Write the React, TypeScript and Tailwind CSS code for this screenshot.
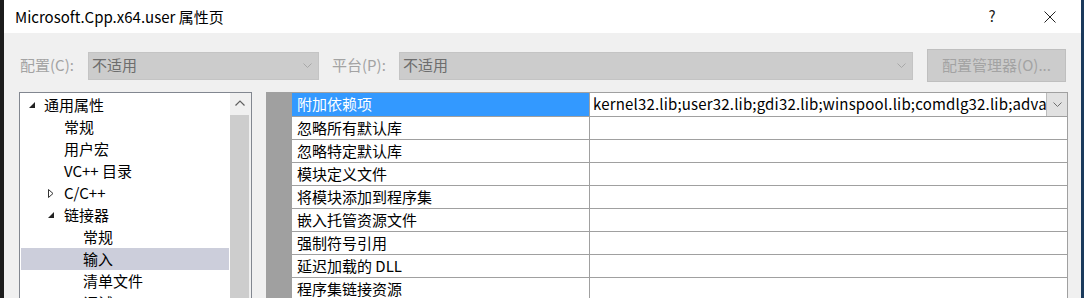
import React from "react";

const FONT = { fontFamily: '"Noto Sans CJK SC", "Noto Sans", sans-serif' };

function ChevronDown({ color = "#a8a8a8" }: { color?: string }) {
  return (
    <svg width="9" height="6" viewBox="0 0 9 6">
      <path d="M0.5 0.5 L4.5 4.5 L8.5 0.5" fill="none" stroke={color} strokeWidth="1" />
    </svg>
  );
}

function ExpandedTri() {
  return (
    <svg width="6" height="6" viewBox="0 0 6 6">
      <polygon points="6,0 6,6 0,6" fill="#222" />
    </svg>
  );
}

function CollapsedTri() {
  return (
    <svg width="6" height="9" viewBox="0 0 6 9">
      <polygon points="0.5,0.5 5,4.5 0.5,8.5" fill="none" stroke="#333" strokeWidth="1" />
    </svg>
  );
}

type TreeItem = { label: string; level: number; tri?: "open" | "closed"; selected?: boolean };

const tree: TreeItem[] = [
  { label: "通用属性", level: 0, tri: "open" },
  { label: "常规", level: 1 },
  { label: "用户宏", level: 1 },
  { label: "VC++ 目录", level: 1 },
  { label: "C/C++", level: 1, tri: "closed" },
  { label: "链接器", level: 1, tri: "open" },
  { label: "常规", level: 2 },
  { label: "输入", level: 2, selected: true },
  { label: "清单文件", level: 2 },
  { label: "调试", level: 2 },
];

const props = [
  "附加依赖项",
  "忽略所有默认库",
  "忽略特定默认库",
  "模块定义文件",
  "将模块添加到程序集",
  "嵌入托管资源文件",
  "强制符号引用",
  "延迟加载的 DLL",
  "程序集链接资源",
];

export default function App() {
  return (
    <div className="w-[1084px] h-[298px] flex bg-[#1c1c1c] overflow-hidden text-black" style={FONT}>
      <div className="w-[4px] shrink-0 bg-[#1c1c1c]" />
      <div className="w-[1077px] shrink-0 flex flex-col bg-[#f0f0f0] overflow-hidden">
        {/* title bar */}
        <div className="h-[33px] shrink-0 bg-white flex items-center pl-[11px] pr-[8px]">
          <div className="text-[15px] leading-none text-black whitespace-nowrap">Microsoft.Cpp.x64.user 属性页</div>
          <div className="ml-auto w-[46px] h-full flex items-center justify-center text-[15px] text-[#222]">?</div>
          <div className="ml-[12px] w-[46px] h-full flex items-center justify-center">
            <svg width="12" height="12" viewBox="0 0 12 12">
              <path d="M0.5 0.5 L11.5 11.5 M11.5 0.5 L0.5 11.5" stroke="#222" strokeWidth="1" />
            </svg>
          </div>
        </div>

        {/* config row */}
        <div className="mt-[16px] h-[33px] shrink-0 flex items-center pl-[16px]">
          <div className="w-[68px] text-[15px] text-[#a3a3a3] whitespace-nowrap">配置(C):</div>
          <div className="w-[231px] h-[28px] bg-[#cccccc] border border-[#c4c4c4] flex items-center pl-[3px] pr-[6px]">
            <span className="text-[15px] text-[#6d6d6d]">不适用</span>
            <span className="ml-auto flex"><ChevronDown /></span>
          </div>
          <div className="ml-[13px] w-[67px] text-[15px] text-[#a3a3a3] whitespace-nowrap">平台(P):</div>
          <div className="w-[514px] h-[28px] bg-[#cccccc] border border-[#c4c4c4] flex items-center pl-[3px] pr-[6px]">
            <span className="text-[15px] text-[#6d6d6d]">不适用</span>
            <span className="ml-auto flex"><ChevronDown /></span>
          </div>
          <div className="ml-[14px] w-[139px] h-[33px] bg-[#cccccc] border border-[#bfbfbf] flex items-center justify-center text-[15px] text-[#a3a3a3] whitespace-nowrap">
            配置管理器(O)...
          </div>
        </div>

        {/* main */}
        <div className="mt-[10px] flex-1 flex pl-[15px] min-h-0">
          {/* tree */}
          <div className="w-[233px] shrink-0 border-l border-t border-r border-[#828790] bg-white flex">
            <div className="flex-1 pt-[1px] px-[1px] overflow-hidden">
              {tree.map((t, i) => {
                const triLeft = t.level === 0 ? 8 : 27;
                const textLeft = t.level === 0 ? 23 : t.level === 1 ? 43 : 62;
                return (
                  <div
                    key={i}
                    className={`h-[22px] flex items-center relative text-[15px] whitespace-nowrap ${t.selected ? "bg-[#cccedb]" : ""}`}
                  >
                    {t.tri && (
                      <span className="absolute flex" style={{ left: triLeft }}>
                        {t.tri === "open" ? <ExpandedTri /> : <CollapsedTri />}
                      </span>
                    )}
                    <span style={{ marginLeft: textLeft }}>{t.label}</span>
                  </div>
                );
              })}
            </div>
            <div className="w-[21px] shrink-0 bg-[#f0f0f0] flex flex-col">
              <div className="h-[20px] flex items-center justify-center pr-[2px]">
                <svg width="10" height="6" viewBox="0 0 10 6">
                  <path d="M0.5 5.5 L5 1 L9.5 5.5" fill="none" stroke="#606060" strokeWidth="1.2" />
                </svg>
              </div>
              <div className="mt-[2px] w-[19px] flex-1 bg-[#cdcdcd]" />
            </div>
          </div>

          {/* property grid */}
          <div className="ml-[14px] w-[802px] shrink-0 border-t border-r border-[#a0a0a0] bg-white flex flex-col">
            {props.map((p, i) => (
              <div key={i} className={`flex shrink-0 ${i === 0 ? "h-[24px]" : "h-[23px]"}`}>
                <div className="w-[26px] shrink-0 bg-[#a0a0a0]" />
                <div
                  className={`w-[298px] shrink-0 border-b border-r border-[#a0a0a0] flex items-center pl-[5px] text-[15px] whitespace-nowrap ${
                    i === 0 ? "bg-[#3399ff] text-white" : "text-black"
                  }`}
                >
                  {p}
                </div>
                <div className="flex-1 min-w-0 border-b border-[#a0a0a0] flex items-center">
                  {i === 0 && (
                    <>
                      <div className="flex-1 min-w-0 overflow-hidden pl-[3px] text-[15px] tracking-[0.18px] whitespace-nowrap">
                        kernel32.lib;user32.lib;gdi32.lib;winspool.lib;comdlg32.lib;advapi32.lib;shell32.lib;ole32.lib
                      </div>
                      <div className="w-[21px] h-full shrink-0 bg-[#e1e1e1] border-l border-[#bcbcbc] flex items-center justify-center">
                        <ChevronDown color="#707070" />
                      </div>
                    </>
                  )}
                </div>
              </div>
            ))}
          </div>
        </div>
      </div>
      <div className="w-[3px] shrink-0 bg-[#1b3a5c]" />
    </div>
  );
}
